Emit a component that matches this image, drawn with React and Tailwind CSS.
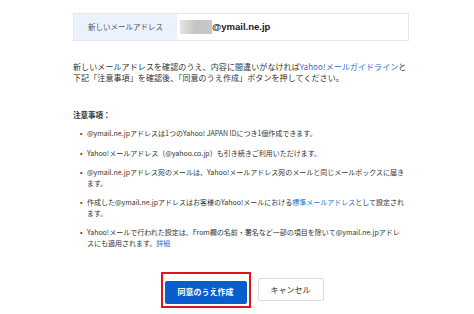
const font = { fontFamily: '"Noto Sans CJK JP", "Noto Sans", sans-serif' }

const notes = [
    <>@ymail.ne.jpアドレスは1つのYahoo! JAPAN IDにつき1個作成できます。</>,
    <>Yahoo!メールアドレス（@yahoo.co.jp）も引き続きご利用いただけます。</>,
    <>@ymail.ne.jpアドレス宛のメールは、Yahoo!メールアドレス宛のメールと同じメールボックスに届きます。</>,
    <>作成した@ymail.ne.jpアドレスはお客様のYahoo!メールにおける<span className="text-[#2f6fd0]">標準メールアドレス</span>として設定されます。</>,
    <>Yahoo!メールで行われた設定は、From欄の名前・署名など一部の項目を除いて@ymail.ne.jpアドレスにも適用されます。<span className="text-[#2f6fd0]">詳細</span></>,
]

const App = () => {
    return (
        <div className="w-[474px] h-[314px] bg-white overflow-hidden text-[#333]" style={font}>
            <div className="ml-[73px] w-[336px] pt-[13px]">
                <div className="flex h-[28px] border border-[#e6e6e6]">
                    <div className="w-[103px] bg-[#eaf3fd] flex items-center justify-center text-[7.5px] text-[#555]">
                        新しいメールアドレス
                    </div>
                    <div className="flex items-center pl-[3px]">
                        <div className="w-[32px] h-[14px] bg-gradient-to-r from-[#e4e4e4] via-[#c4c4c4] to-[#c9c9c9]"></div>
                        <span className="text-[9.5px] font-bold text-[#222] leading-none font-['Liberation_Sans',sans-serif]">@ymail.ne.jp</span>
                    </div>
                </div>

                <p className="mt-[20px] text-[8px] leading-[11px] tracking-[0.1px]">
                    新しいメールアドレスを確認のうえ、内容に間違いがなければ<span className="text-[#2f6fd0]">Yahoo!メールガイドライン</span>と<br />
                    下記「注意事項」を確認後、「同意のうえ作成」ボタンを押してください。
                </p>

                <p className="mt-[26px] text-[7.5px] leading-[11px] font-bold">注意事項：</p>

                <ul className="mt-[8px] flex flex-col gap-[9px] text-[7px] leading-[10.5px] pr-[4.6px]">
                    {notes.map((n, key) => (
                        <li key={key} className="flex">
                            <span className="w-[14px] shrink-0 pl-[7px]">•</span>
                            <span>{n}</span>
                        </li>
                    ))}
                </ul>

                <div className="mt-[24px] flex justify-center items-center gap-[7px] pl-[2px]">
                    <div className="border-2 border-[#e0141e] p-[2px]">
                        <button className="w-[82px] h-[23px] bg-[#0a5dcf] rounded-[2px] text-white text-[8px] font-bold">同意のうえ作成</button>
                    </div>
                    <button className="w-[66px] h-[23px] bg-white border border-[#dcdcdc] rounded-[2px] text-[8px] text-[#333]">キャンセル</button>
                </div>
            </div>
        </div>
    )
}

export default App
